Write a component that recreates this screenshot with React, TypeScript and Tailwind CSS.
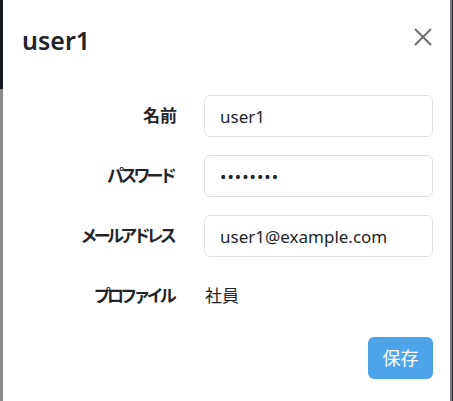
import React from 'react';

const FONT = "font-['Segoe_UI','Noto_Sans','Noto_Sans_CJK_JP',sans-serif]";

const Field: React.FC<{ label: string; tight?: boolean; children: React.ReactNode }> = ({ label, tight, children }) => (
  <>
    <div
      className={`flex items-center justify-end h-[42px] text-[17px] font-bold text-[#212529] ${
        tight ? 'tracking-[-3.8px] pr-[4px]' : ''
      }`}
    >
      {label}
    </div>
    <div className="flex items-center h-[42px]">{children}</div>
  </>
);

const inputCls =
  'w-full h-[42px] px-[15px] rounded-[6px] border border-[#dee2e6] text-[17px] text-[#212529] outline-none';

export default function App() {
  return (
    <div className={`flex w-[453px] h-[401px] overflow-hidden ${FONT}`}>
      {/* backdrop, left */}
      <div className="flex flex-col w-[3px]">
        <div className="h-[89px] bg-[#15191d]"></div>
        <div className="flex-1 bg-[#8a8a8a]"></div>
      </div>

      {/* modal */}
      <div className="flex-1 flex flex-col bg-white">
        <div className="flex items-center justify-between h-[80px] pl-[19px] pr-[17px]">
          <h5 className="text-[25px] font-semibold text-[#212529] leading-none">user1</h5>
          <button className="w-[24px] h-[24px] flex items-center justify-center text-[#6b6b6b] mr-[-2px] mt-[-6px]">
            <svg width="18" height="18" viewBox="0 0 18 18" fill="none" stroke="currentColor" strokeWidth="1.8">
              <path d="M1 1L17 17M17 1L1 17" />
            </svg>
          </button>
        </div>

        <div className="pt-[15px] pr-[17px]">
          <div className="grid grid-cols-[174px_1fr] gap-x-[27px] gap-y-[18px]">
            <Field label="名前">
              <input readOnly value="user1" className={inputCls} />
            </Field>
            <Field label="パスワード" tight>
              <input readOnly type="password" value="password" className={`${inputCls} tracking-[1px]`} />
            </Field>
            <Field label="メールアドレス" tight>
              <input readOnly value="user1@example.com" className={inputCls} />
            </Field>
            <Field label="プロファイル" tight>
              <span className="pl-[1px] text-[17px] text-[#212529]">社員</span>
            </Field>
          </div>

          <div className="flex justify-end mt-[20px]">
            <button className="w-[65px] h-[42px] rounded-[6px] bg-[#4ea4e9] text-white text-[18px]">保存</button>
          </div>
        </div>
      </div>

      {/* backdrop, right */}
      <div className="w-[2px] bg-[#7a7a7a]"></div>
      <div className="w-[1px] bg-[#2b2f34]"></div>
    </div>
  );
}
